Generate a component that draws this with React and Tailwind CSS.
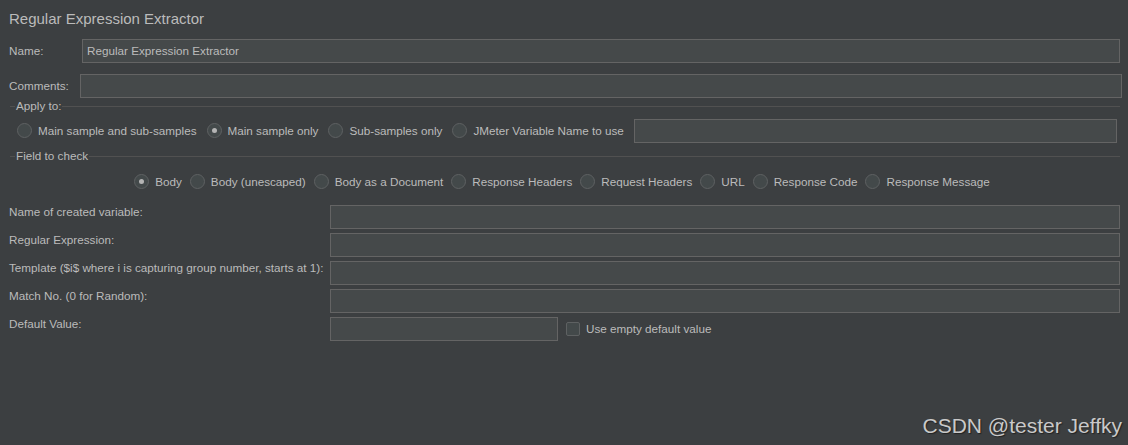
import React from "react";

function Radio({ label, checked }) {
  return (
    <div className="flex items-center gap-[6px]">
      <span className="flex h-[15px] w-[15px] shrink-0 items-center justify-center rounded-full border border-[#5e6162] bg-[#43494a]">
        {checked && <span className="h-[5px] w-[5px] rounded-full bg-[#b4b4b4]" />}
      </span>
      <span className="whitespace-nowrap">{label}</span>
    </div>
  );
}

function Field({ className = "" }) {
  return <div className={"h-[24px] shrink-0 border border-[#646464] bg-[#45494a] " + className} />;
}

function Legend({ title }) {
  return (
    <div className="flex h-[16px] items-center pl-[10px] pr-[8px]">
      <span className="h-px w-[5px] bg-[#515151]" />
      <span className="px-[1px] leading-[14px]">{title}</span>
      <span className="h-px flex-1 bg-[#515151]" />
    </div>
  );
}

const fieldOptions = [
  ["Body", true],
  ["Body (unescaped)", false],
  ["Body as a Document", false],
  ["Response Headers", false],
  ["Request Headers", false],
  ["URL", false],
  ["Response Code", false],
  ["Response Message", false],
];

const rows = [
  "Name of created variable:",
  "Regular Expression:",
  "Template ($i$ where i is capturing group number, starts at 1):",
  "Match No. (0 for Random):",
];

export default function App() {
  return (
    <div
      className="relative flex h-[445px] w-[1128px] flex-col overflow-hidden bg-[#3c3f41] text-[11.7px] text-[#bbbbbb]"
      style={{ fontFamily: '"Liberation Sans", Arial, sans-serif' }}
    >
      <div className="pl-[9px] pt-[9px] text-[15px] leading-[20px]">Regular Expression Extractor</div>

      <div className="mt-[10px] flex items-center">
        <span className="w-[82px] shrink-0 pl-[9px]">Name:</span>
        <div className="flex h-[24px] w-[1038px] shrink-0 items-center border border-[#646464] bg-[#45494a] pl-[4px]">
          Regular Expression Extractor
        </div>
      </div>

      <div className="mt-[11px] flex items-center">
        <span className="w-[80px] shrink-0 pl-[9px]">Comments:</span>
        <Field className="w-[1042px]" />
      </div>

      <Legend title="Apply to:" />

      <div className="mt-[5px] flex h-[24px] items-center gap-[10px] pl-[17px]">
        <Radio label="Main sample and sub-samples" />
        <Radio label="Main sample only" checked />
        <Radio label="Sub-samples only" />
        <Radio label="JMeter Variable Name to use" />
        <Field className="w-[483px]" />
      </div>

      <div className="mt-[5px]">
        <Legend title="Field to check" />
      </div>

      <div className="mt-[8px] flex h-[20px] items-center justify-center gap-[8px] pr-[4px]">
        {fieldOptions.map(([label, checked]) => (
          <Radio key={label} label={label} checked={checked} />
        ))}
      </div>

      <div className="mt-[13px] flex flex-col gap-[4px] pr-[8px]">
        {rows.map((label) => (
          <div key={label} className="flex items-start">
            <span className="w-[330px] shrink-0 whitespace-nowrap pl-[9px] pt-[1px] leading-[12px]">{label}</span>
            <div className="h-[24px] flex-1 border border-[#646464] bg-[#45494a]" />
          </div>
        ))}
        <div className="flex items-start">
          <span className="w-[330px] shrink-0 pl-[9px] pt-[1px] leading-[12px]">Default Value:</span>
          <Field className="w-[228px]" />
          <div className="ml-[8px] flex h-[24px] items-center gap-[6px]">
            <span className="h-[14px] w-[14px] rounded-[2px] border border-[#5e6162] bg-[#43494a]" />
            <span>Use empty default value</span>
          </div>
        </div>
      </div>

      <div className="absolute bottom-[7px] right-[6px] text-[21px] leading-[24px] text-[#c9c9c9] [text-shadow:1px_1px_1px_#222]">
        CSDN @tester Jeffky
      </div>
    </div>
  );
}
